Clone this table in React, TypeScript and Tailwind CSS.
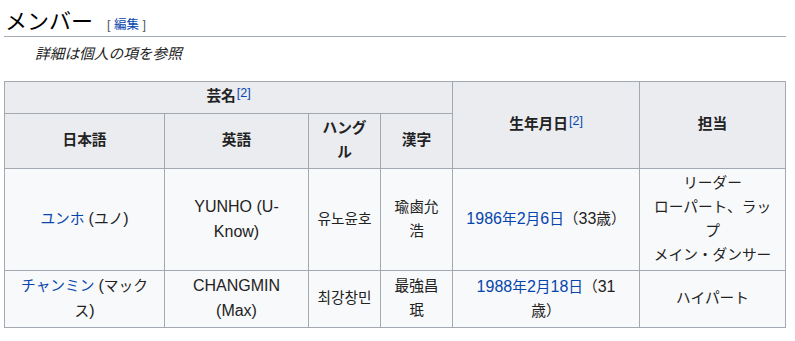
import React from "react";

const th = "border border-[#a2a9b1] bg-[#eaecf0] px-[6px] py-[3.5px] text-center align-middle font-bold";
const td = "border border-[#a2a9b1] bg-[#f8f9fa] px-[6px] py-[3px] text-center align-middle";

function Ref() {
  return (
    <span className="ml-px text-[12.5px] leading-none font-normal text-[#0645ad] align-[4px]">[2]</span>
  );
}

// Latin runs render a little wider in the reference font
function L({ children }: { children: React.ReactNode }) {
  return <span className="text-[16px]">{children}</span>;
}

export default function App() {
  return (
    <div className="bg-white text-[#222222] pl-[4px] w-[786px] font-['Liberation_Sans','Noto_Sans_CJK_JP',sans-serif] text-[14.7px] leading-[23.8px]">
      {/* Heading */}
      <h2 className="h-[37px] border-b border-[#a2a9b1] pt-[7px] pl-px text-[22px] leading-[29px] font-normal text-black">
        メンバー
        <span className="ml-[14px] text-[12.5px] leading-none text-[#54595d]">
          [ <span className="text-[#0645ad]">編集</span> ]
        </span>
      </h2>

      <div className="pl-[31px] pt-[6px] italic">詳細は個人の項を参照</div>

      <table className="mt-[14px] w-[781px] table-fixed border-collapse border border-[#a2a9b1]">
        <colgroup>
          <col className="w-[160px]" />
          <col className="w-[144px]" />
          <col className="w-[72px]" />
          <col className="w-[72px]" />
          <col className="w-[187px]" />
          <col className="w-[146px]" />
        </colgroup>
        <thead>
          <tr>
            <th colSpan={4} className={th}>
              芸名<Ref />
            </th>
            <th rowSpan={2} className={th}>
              生年月日<Ref />
            </th>
            <th rowSpan={2} className={th}>
              担当
            </th>
          </tr>
          <tr>
            <th className={th}>日本語</th>
            <th className={th}>英語</th>
            <th className={th}>
              ハング
              <br />ル
            </th>
            <th className={th}>漢字</th>
          </tr>
        </thead>
        <tbody>
          <tr>
            <td className={td}>
              <span className="text-[#0645ad]">ユンホ</span> <L>(</L>ユノ<L>)</L>
            </td>
            <td className={td}>
              <L>YUNHO (U-</L>
              <br />
              <L>Know)</L>
            </td>
            <td className={td}>유노윤호</td>
            <td className={td}>
              瑜鹵允
              <br />浩
            </td>
            <td className={td}>
              <span className="text-[#0645ad]">
                <L>1986</L>年<L>2</L>月<L>6</L>日
              </span>
              （<L>33</L>歳）
            </td>
            <td className={td}>
              リーダー
              <br />
              ローパート、ラッ
              <br />プ
              <br />
              メイン・ダンサー
            </td>
          </tr>
          <tr>
            <td className={td}>
              <span className="text-[#0645ad]">チャンミン</span> <L>(</L>マック
              <br />
              ス<L>)</L>
            </td>
            <td className={td}>
              <L>CHANGMIN</L>
              <br />
              <L>(Max)</L>
            </td>
            <td className={td}>최강창민</td>
            <td className={td}>
              最強昌
              <br />珉
            </td>
            <td className={td}>
              <span className="text-[#0645ad]">
                <L>1988</L>年<L>2</L>月<L>18</L>日
              </span>
              （<L>31</L>
              <br />
              歳）
            </td>
            <td className={td}>ハイパート</td>
          </tr>
        </tbody>
      </table>
    </div>
  );
}
